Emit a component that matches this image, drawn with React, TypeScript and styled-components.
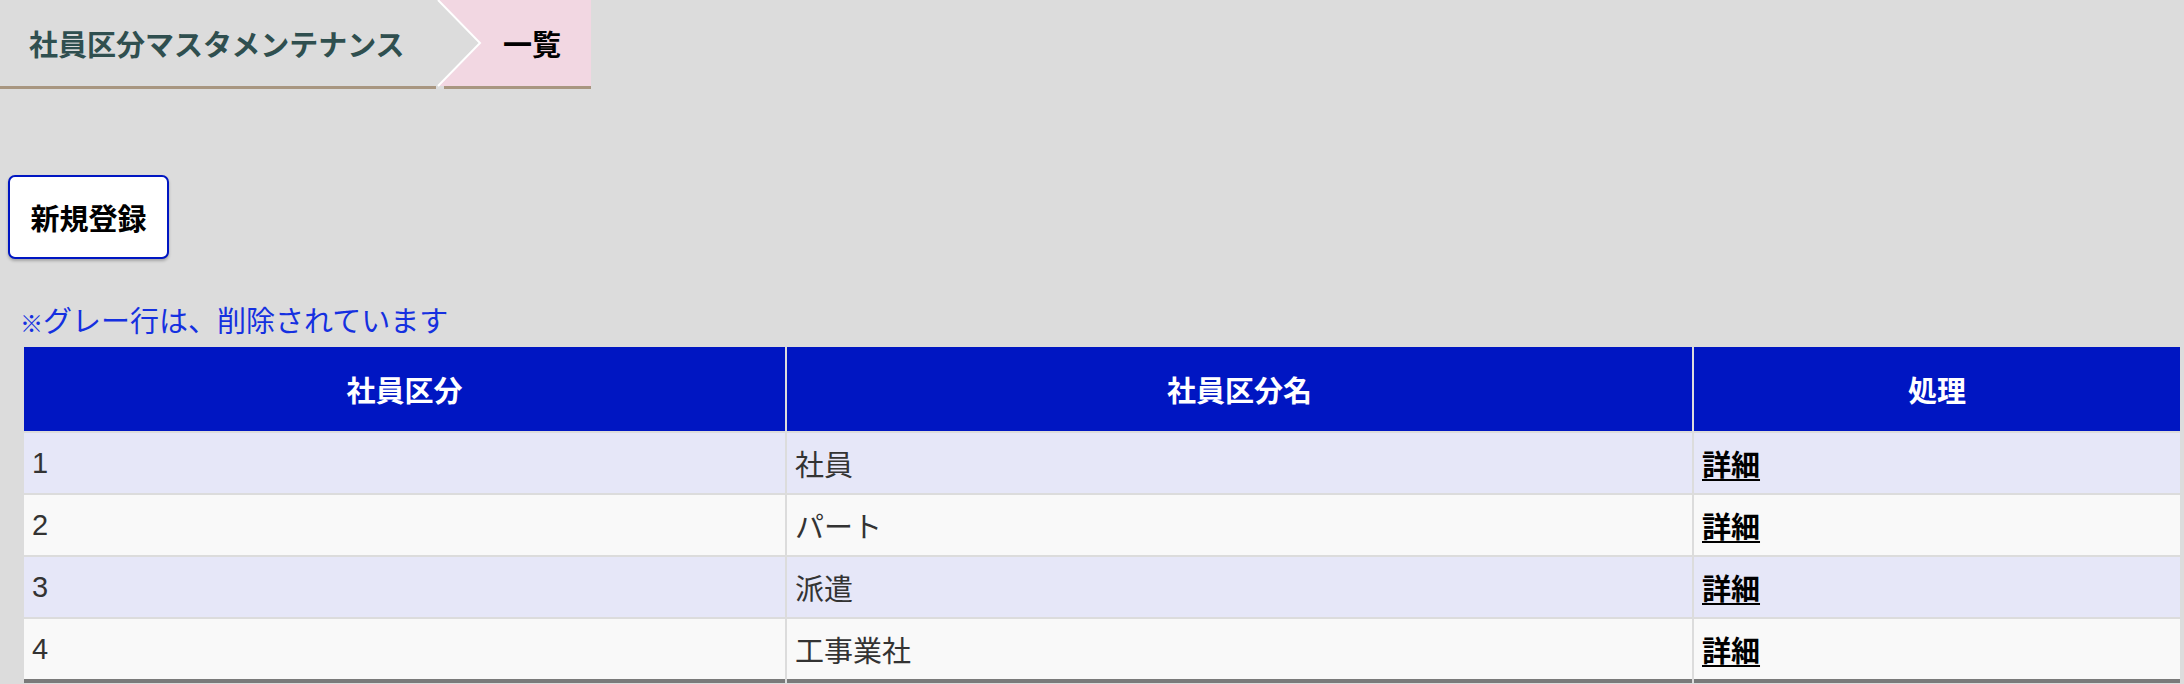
import React from "react";
import styled, { createGlobalStyle } from "styled-components";

const GlobalStyle = createGlobalStyle`
  html, body {
    margin: 0;
    padding: 0;
    background: #dcdcdc;
  }
  body {
    font-family: "Liberation Sans", "Noto Sans CJK JP", sans-serif;
    color: #333333;
  }
`;

const Page = styled.div`
  width: 2184px;
  min-height: 684px;
  background: #dcdcdc;
`;

const Crumbs = styled.nav`
  display: flex;
  align-items: stretch;
  height: 89px;
  font-family: "Noto Sans CJK JP", sans-serif;
  font-size: 29px;
  font-weight: 700;
`;

const CrumbTitle = styled.div`
  position: relative;
  box-sizing: border-box;
  width: 436px;
  padding-left: 29px;
  display: flex;
  align-items: center;
  color: #2f4f4f;
  border-bottom: 3px solid #a89680;
`;

const Arrow = styled.svg`
  position: absolute;
  left: 100%;
  top: 0;
  width: 46px;
  height: 89px;
  z-index: 1;
`;

const CrumbCurrent = styled.div`
  box-sizing: border-box;
  margin-left: 2px;
  padding: 0 30px 0 65px;
  display: flex;
  align-items: center;
  color: #000000;
  background: #f2d7e2;
  border-bottom: 3px solid #a89680;
`;

const Main = styled.main`
  padding-left: 8px;
`;

const NewButton = styled.button`
  box-sizing: border-box;
  margin-top: 86px;
  width: 161px;
  height: 84px;
  padding: 0;
  border: 2px solid #0016c2;
  border-radius: 7px;
  background: #ffffff;
  box-shadow: 0 2px 3px rgba(0, 0, 0, 0.25);
  font-family: "Noto Sans CJK JP", sans-serif;
  font-size: 29px;
  font-weight: 700;
  color: #000000;
  cursor: pointer;
`;

const Note = styled.p`
  margin: 40px 0 0;
  padding-left: 12px;
  font-family: "Noto Sans CJK JP", sans-serif;
  font-size: 29px;
  line-height: 40px;
  color: #1530e0;
`;

const NoteMark = styled.span`
  font-size: 23px;
  font-weight: 700;
`;

const Table = styled.table`
  margin: 3px 0 0 14px;
  table-layout: fixed;
  width: 2160px;
  border-collapse: separate;
  border-spacing: 2px;
  font-size: 29px;
`;

const HeadCell = styled.th`
  height: 84px;
  padding: 0 8px;
  background: #0016c2;
  color: #ffffff;
  font-family: "Noto Sans CJK JP", sans-serif;
  font-weight: 700;
  text-align: center;
  vertical-align: middle;
`;

const Row = styled.tr<{ $odd: boolean }>`
  background: ${(p) => (p.$odd ? "#e6e7f8" : "#f9f9f9")};
  &:last-child td {
    border-bottom: 4px solid #7a7a7a;
  }
`;

const Cell = styled.td`
  height: 60px;
  padding: 0 8px;
  vertical-align: middle;
  color: #333333;
  font-weight: 400;
`;

const DetailLink = styled.a`
  font-family: "Noto Sans CJK JP", sans-serif;
  font-weight: 700;
  color: #000000;
  text-decoration: underline;
  text-underline-offset: 3px;
  cursor: pointer;
`;

const rows = [
  { id: "1", name: "社員" },
  { id: "2", name: "パート" },
  { id: "3", name: "派遣" },
  { id: "4", name: "工事業社" },
];

export default function App() {
  return (
    <Page>
      <GlobalStyle />
      <Crumbs>
        <CrumbTitle>
          社員区分マスタメンテナンス
          <Arrow viewBox="0 0 46 89">
            <polygon points="0,0 2,0 44,43 2,86 8,86 8,89 0,89" fill="#dcdcdc" />
            <polyline points="2,0 44,43 2,86" fill="none" stroke="#ffffff" strokeWidth="2" />
          </Arrow>
        </CrumbTitle>
        <CrumbCurrent>一覧</CrumbCurrent>
      </Crumbs>
      <Main>
        <NewButton type="button">新規登録</NewButton>
        <Note>
          <NoteMark>※</NoteMark>グレー行は、削除されています
        </Note>
        <Table>
          <colgroup>
            <col style={{ width: 761 }} />
            <col style={{ width: 905 }} />
            <col style={{ width: 486 }} />
          </colgroup>
          <thead>
            <tr>
              <HeadCell>社員区分</HeadCell>
              <HeadCell>社員区分名</HeadCell>
              <HeadCell>処理</HeadCell>
            </tr>
          </thead>
          <tbody>
            {rows.map((r, i) => (
              <Row key={r.id} $odd={i % 2 === 0}>
                <Cell>{r.id}</Cell>
                <Cell>{r.name}</Cell>
                <Cell>
                  <DetailLink>詳細</DetailLink>
                </Cell>
              </Row>
            ))}
          </tbody>
        </Table>
      </Main>
    </Page>
  );
}
